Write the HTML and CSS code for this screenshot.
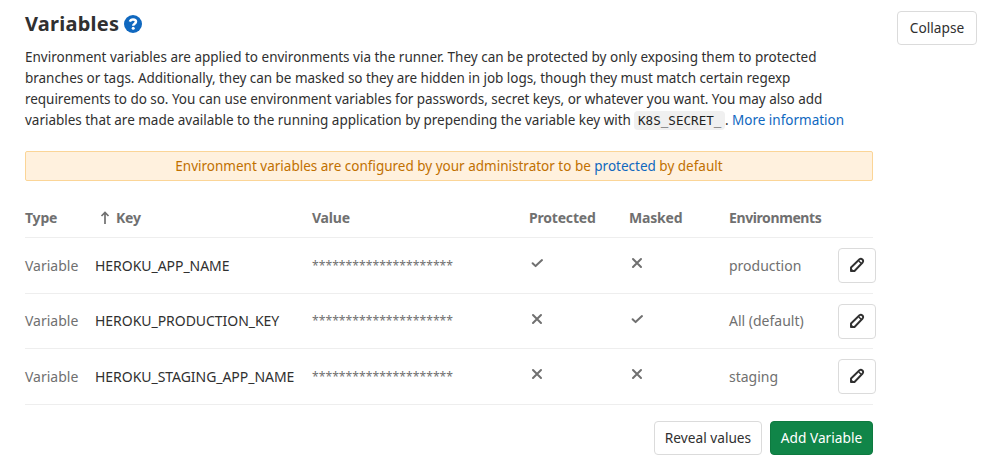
FILE: index.html
```html
<!DOCTYPE html>
<html lang="en">
<head>
<meta charset="utf-8">
<title>Variables</title>
<link rel="stylesheet" href="styles.css">
</head>
<body>
<svg class="sprite" aria-hidden="true">
  <symbol id="check" viewBox="0 0 16 16"><path d="M3.6 8.2l3 2.9 6.4-6" fill="none" stroke="currentColor" stroke-width="2" stroke-linecap="round" stroke-linejoin="round"/></symbol>
  <symbol id="close" viewBox="0 0 16 16"><path d="M4 4l8 8M12 4l-8 8" fill="none" stroke="currentColor" stroke-width="2" stroke-linecap="round"/></symbol>
  <symbol id="pencil" viewBox="0 0 16 16"><path d="M2 14v-3.500L10.500 2.300Q12 1.200 13.400 2.500Q14.800 4 13.600 5.500L5.500 14Z" fill="none" stroke="currentColor" stroke-width="1.900" stroke-linejoin="round"/><path d="M1.500 14.500v-4l4 4z" fill="currentColor"/><path d="M9.800 4l2.300 2.300" stroke="currentColor" stroke-width="1.500"/></symbol>
</svg>
<section class="settings">
  <header class="heading">
    <h4>Variables</h4>
    <svg class="help" viewBox="0 0 18 18"><circle cx="9" cy="9" r="9" fill="#1068bf"/><path d="M5.9 6.7C6.4 5.2 7.5 4.5 9 4.5c1.8 0 3 .9 3 2.3 0 1.9-2.800 1.9-2.800 3.900" fill="none" stroke="#fff" stroke-width="2.5"/><circle cx="9.2" cy="13.3" r="1.5" fill="#fff"/></svg>
  </header>
  <p class="intro">
    <span class="line l1">Environment variables are applied to environments via the runner. They can be protected by only exposing them to protected</span>
    <span class="line l2">branches or tags. Additionally, they can be masked so they are hidden in job logs, though they must match certain regexp</span>
    <span class="line l3">requirements to do so. You can use environment variables for passwords, secret keys, or whatever you want. You may also add</span>
    <span class="line l4"><span class="lead">variables that are made available to the running application by prepending the variable key with</span><code>K8S_SECRET_</code><span class="dot">.</span><a class="more">More information</a></span>
  </p>
  <div class="notice"><span>Environment variables are configured by your administrator to be <a>protected</a> by default</span></div>
  <div class="table">
    <div class="row head"><span>Type</span><span class="sort"><svg viewBox="0 0 10 14"><path d="M5 13V2M1.5 5L5 1.5 8.5 5" fill="none" stroke="currentColor" stroke-width="1.7"/></svg><span>Key</span></span><span>Value</span><span>Protected</span><span>Masked</span><span class="env">Environments</span></div>
    <div class="row r1"><span>Variable</span><span class="key">HEROKU_APP_NAME</span><span class="stars">*********************</span><svg class="mark"><use href="#check"/></svg><svg class="mark"><use href="#close"/></svg><span>production</span><button class="btn edit"><svg><use href="#pencil"/></svg></button></div>
    <div class="row r2"><span>Variable</span><span class="key">HEROKU_PRODUCTION_KEY</span><span class="stars">*********************</span><svg class="mark"><use href="#close"/></svg><svg class="mark"><use href="#check"/></svg><span>All (default)</span><button class="btn edit"><svg><use href="#pencil"/></svg></button></div>
    <div class="row r3"><span>Variable</span><span class="key">HEROKU_STAGING_APP_NAME</span><span class="stars">*********************</span><svg class="mark"><use href="#close"/></svg><svg class="mark"><use href="#close"/></svg><span>staging</span><button class="btn edit"><svg><use href="#pencil"/></svg></button></div>
  </div>
  <footer class="actions"><button class="btn reveal">Reveal values</button><button class="btn add">Add Variable</button></footer>
</section>
<button class="btn collapse">Collapse</button>
</body>
</html>
```

FILE: styles.css
```css
* { box-sizing: border-box; }
body {
  margin: 0; height: 471px; padding: 11px 11px 0 25px;
  display: flex; align-items: flex-start; justify-content: space-between;
  overflow: hidden; background: #fff; color: #303030;
  font: 14px/21px "Noto Sans", "Open Sans", sans-serif;
}
.sprite { display: none; }
.settings { width: 848px; }
.heading { display: flex; align-items: center; height: 25px; gap: 6px; }
h4 { margin: 0; font-size: 20px; line-height: 24px; font-weight: 700; width: 93px; letter-spacing: 0.25px; }
.help { width: 18px; height: 18px; }
.intro { margin: 11px 0 21px; height: 83px; white-space: nowrap; font-size: 13.5px; }
.line { display: block; height: 21px; }
.l2, .l3 { letter-spacing: -0.035px; }
.l4 { display: flex; align-items: center; }
.lead { width: 609px; letter-spacing: -0.02px; }
code { width: 91px; height: 19px; padding: 0 4px; border-radius: 4px; background: #f0f0f0; color: #1f1f1f; font: 12.6px/19px "DejaVu Sans Mono", monospace; }
.dot { width: 7px; }
a { color: #1068bf; }
.notice { height: 30px; border: 1px solid #fbd597; border-radius: 2px; background: #fff1de; color: #c17000; text-align: center; font-size: 13.5px; line-height: 28px; }
.table { margin-top: 17px; color: #707070; }
.row { display: grid; grid-template-columns: 70px 217px 217px 100px 100px 109px 38px; align-items: center; height: 56px; border-bottom: 1px solid #eee; white-space: nowrap; }
.row.r2 { height: 55px; }
.r2 > span { padding-bottom: 2px; }
.head { height: 40px; font-weight: 700; letter-spacing: -0.2px; }
.env { letter-spacing: -0.4px; }
.sort { display: flex; align-items: center; gap: 6px; padding-left: 5px; }
.sort svg { width: 10px; height: 14px; }
.key { color: #303030; letter-spacing: -0.04px; }
.stars { font-size: 12.2px; }
.mark { width: 16px; height: 16px; margin-top: -5px; }
.btn { height: 34px; padding: 0 0 1px; border: 1px solid #dbdbdb; border-radius: 4px; background: #fff; color: #303030; font: inherit; font-size: 13.7px; white-space: nowrap; }
.edit { width: 38px; height: 35px; display: grid; place-items: center; }
.edit svg { width: 16px; height: 16px; }
.actions { display: flex; justify-content: flex-end; gap: 8px; margin-top: 16px; }
.reveal { width: 108px; }
.add { width: 103px; background: #108548; border-color: #0e7a40; color: #fff; }
.collapse { width: 80px; }
```
